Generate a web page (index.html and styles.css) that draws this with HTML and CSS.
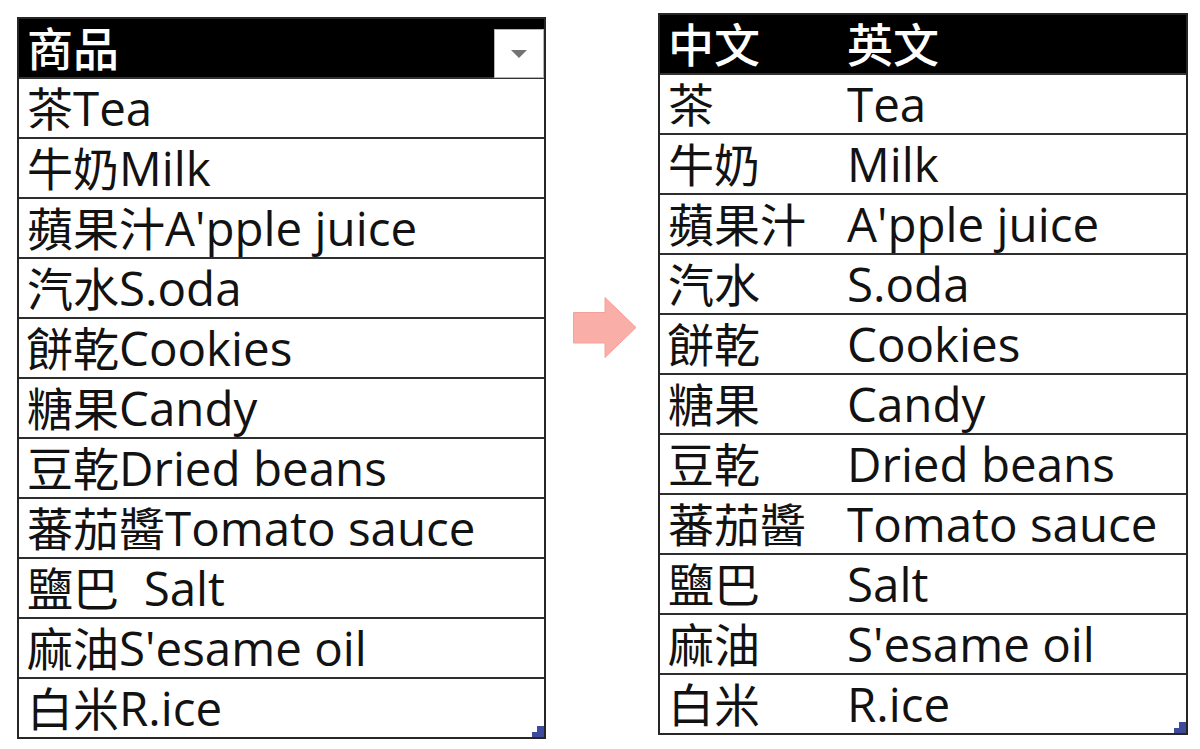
FILE: index.html
```html
<!DOCTYPE html>
<html lang="zh-Hant">
<head>
<meta charset="utf-8">
<title>表格分欄</title>
<link rel="stylesheet" href="styles.css">
</head>
<body>
<div class="page">
  <div class="table left">
    <div class="row head">
      <div class="cell">商品</div>
      <div class="filter"><span class="tri"></span></div>
    </div>
    <div class="row"><div class="cell">茶<span class="en">Tea</span></div></div>
    <div class="row"><div class="cell">牛奶<span class="en">Milk</span></div></div>
    <div class="row"><div class="cell">蘋果汁<span class="en">A'pple juice</span></div></div>
    <div class="row"><div class="cell">汽水<span class="en">S.oda</span></div></div>
    <div class="row"><div class="cell">餅乾<span class="en">Cookies</span></div></div>
    <div class="row"><div class="cell">糖果<span class="en">Candy</span></div></div>
    <div class="row"><div class="cell">豆乾<span class="en">Dried beans</span></div></div>
    <div class="row"><div class="cell">蕃茄醬<span class="en">Tomato sauce</span></div></div>
    <div class="row"><div class="cell">鹽巴<span class="en">  Salt</span></div></div>
    <div class="row"><div class="cell">麻油<span class="en">S'esame oil</span></div></div>
    <div class="row"><div class="cell">白米<span class="en">R.ice</span></div></div>
    <svg class="handle" width="12" height="11" viewBox="0 0 12 11"><polygon points="12,0 12,11 0,11 0,6 5,6 5,0" fill="#3e4a9c"/></svg>
  </div>

  <div class="arrow">
    <svg width="64" height="61" viewBox="0 0 64 61"><polygon points="0.5,15.5 32,15.5 32,0.5 63,30.5 32,60.5 32,46 0.5,46" fill="#f9aea7" stroke="#f3a29a" stroke-width="1"/></svg>
  </div>

  <div class="table right">
    <div class="row head two"><div class="cell">中文</div><div class="cell">英文</div></div>
    <div class="row two"><div class="cell">茶</div><div class="cell en">Tea</div></div>
    <div class="row two"><div class="cell">牛奶</div><div class="cell en">Milk</div></div>
    <div class="row two"><div class="cell">蘋果汁</div><div class="cell en">A'pple juice</div></div>
    <div class="row two"><div class="cell">汽水</div><div class="cell en">S.oda</div></div>
    <div class="row two"><div class="cell">餅乾</div><div class="cell en">Cookies</div></div>
    <div class="row two"><div class="cell">糖果</div><div class="cell en">Candy</div></div>
    <div class="row two"><div class="cell">豆乾</div><div class="cell en">Dried beans</div></div>
    <div class="row two"><div class="cell">蕃茄醬</div><div class="cell en">Tomato sauce</div></div>
    <div class="row two"><div class="cell">鹽巴</div><div class="cell en">Salt</div></div>
    <div class="row two"><div class="cell">麻油</div><div class="cell en">S'esame oil</div></div>
    <div class="row two"><div class="cell">白米</div><div class="cell en">R.ice</div></div>
    <svg class="handle" width="12" height="11" viewBox="0 0 12 11"><polygon points="12,0 12,11 0,11 0,6 5,6 5,0" fill="#3e4a9c"/></svg>
  </div>
</div>
</body>
</html>
```

FILE: styles.css
```css
* { box-sizing: border-box; }
html, body { margin: 0; padding: 0; background: #fff; }
body {
  font-family: "Open Sans", "Noto Sans CJK TC", sans-serif;
  color: #121212;
}
.page {
  display: flex;
  align-items: flex-start;
  padding: 13px 0 0 17px;
  width: 1200px;
  height: 749px;
}
.table {
  position: relative;
  border: 2px solid #262626;
  background: #fff;
}
.table.left { width: 529px; margin-top: 4px; }
.table.right { width: 530px; }
.row {
  display: flex;
  height: 60px;
  border-bottom: 2px solid #2e2e2e;
}
.row:nth-last-child(2) { border-bottom: none; height: 58px; }
.cell {
  font-size: 46px;
  line-height: 58px;
  white-space: pre;
  padding-left: 8px;
}
.en { font-size: 47.5px; }
.head {
  background: #000;
  color: #fff;
  border-bottom: 2px solid #333;
}
.head .cell { font-weight: 500; }
.two .cell:first-child { width: 177px; flex: none; }
.two .cell:last-child { padding-left: 10px; }
.left .cell { flex: 1; }
.filter {
  align-self: flex-end;
  width: 50px;
  height: 49px;
  background: #fff;
  border: 1px solid #b5b5b5;
  display: flex;
  align-items: center;
  justify-content: center;
  margin-bottom: -1px;
}
.tri {
  width: 0;
  height: 0;
  border-left: 8px solid transparent;
  border-right: 8px solid transparent;
  border-top: 8px solid #737373;
}
.arrow {
  width: 112px;
  padding: 284px 0 0 27px;
  flex: none;
}
.arrow svg { display: block; }
.handle {
  position: absolute;
  right: 0;
  bottom: 0;
}
```
